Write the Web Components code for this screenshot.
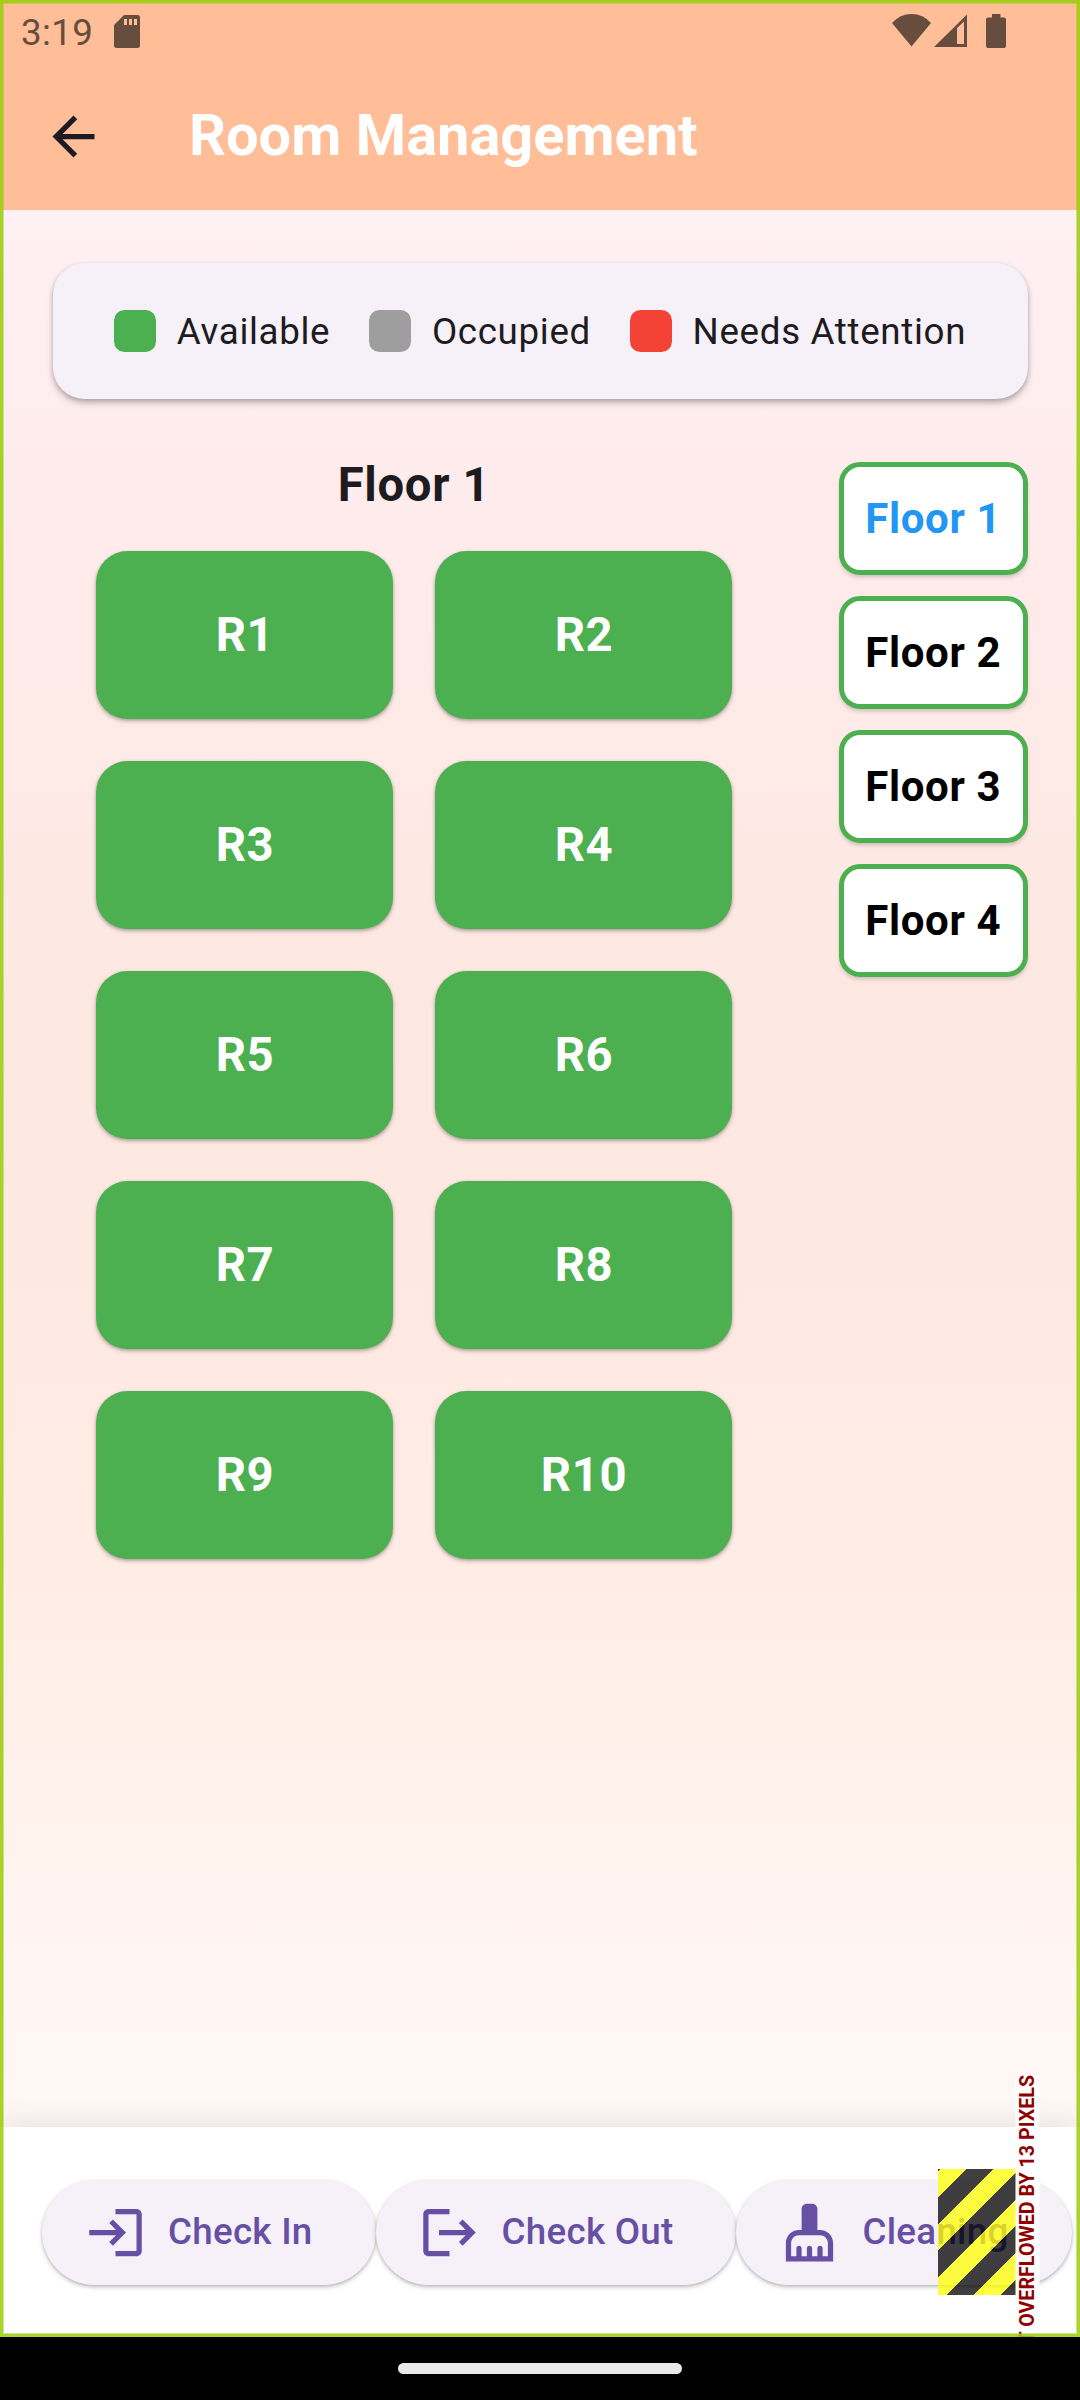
<!DOCTYPE html>
<html lang="en">
<head>
<meta charset="utf-8">
<title>Room Management</title>
<style>
html,body{margin:0;padding:0}
body{width:1080px;height:2400px;overflow:hidden;font-family:Roboto,sans-serif;background:#000;color:#1d1b20}
</style>
</head>
<body>
<hotel-app></hotel-app>
<script>
const define = (name, html) => {
  const t = document.createElement('template');
  t.innerHTML = html;
  customElements.define(name, class extends HTMLElement {
    constructor() {
      super();
      this.attachShadow({ mode: 'open' }).appendChild(t.content.cloneNode(true));
    }
  });
};

define('status-bar', `
<style>
:host{display:flex;height:63px;padding:0 74px 0 21px;box-sizing:border-box;align-items:flex-start;color:#664d3d}
.time{font-size:36.75px;line-height:43px;margin-top:11px;letter-spacing:.35px;width:93px}
svg{display:block;fill:currentColor}
.right{margin-left:auto;display:flex;padding-top:14px}
.sd{margin-top:15px}
</style>
<span class="time">3:19</span>
<svg class="sd" width="26" height="33" viewBox="0 0 26 33"><path fill-rule="evenodd" d="M10 0h13.500q2.500 0 2.500 2.500v28q0 2.500-2.500 2.500h-21q-2.500 0-2.500-2.500V10zM10 4v6h3V4zM15 4v6h3V4zM20 4v6h3V4z"/></svg>
<div class="right">
<svg width="39" height="33" viewBox="0 0 39 33"><path d="M0 9Q8 0 19.500 0T39 9L19.500 32.500z"/></svg>
<svg width="33" height="33" viewBox="0 0 33 33" style="margin-left:3px"><path fill-rule="evenodd" d="M0 33L33 .5V33zM23 14v16h7V7.500z"/></svg>
<svg width="20" height="34" viewBox="0 0 20 34" style="margin-left:19px"><path d="M6 0h8.500v3.500H18q2 0 2 2V32q0 2-2 2H2q-2 0-2-2V5.500q0-2 2-2h4z"/></svg>
</div>`);

define('app-bar', `
<style>
:host{display:flex;align-items:center;height:147px;padding-left:42px;box-sizing:border-box}
svg{width:63px;height:63px;fill:#1d1b20}
h1{margin:0 0 3px 84px;font-size:57.75px;line-height:68px;font-weight:700;color:#fff;white-space:nowrap}
</style>
<svg viewBox="0 0 24 24"><path d="M20 11H7.830l5.590-5.590L12 4l-8 8 8 8 1.410-1.410L7.830 13H20v-2z"/></svg>
<h1><slot></slot></h1>`);

define('legend-item', `
<style>
:host{display:flex;align-items:center;gap:21px;font-size:36.75px;line-height:52.5px;letter-spacing:.656px;white-space:nowrap}
i{width:42px;height:42px;border-radius:10.5px;background:var(--swatch)}
span{padding-top:2px}
</style><i></i><span><slot></slot></span>`);

define('legend-card', `
<style>
:host{display:flex;justify-content:space-around;align-items:center;height:136.500px;box-sizing:border-box;padding:0 42px;border-radius:31.5px;background:#f6f1f9;box-shadow:0 4px 6px rgba(0,0,0,.25),0 1px 4px rgba(0,0,0,.12)}
</style><slot></slot>`);

define('room-card', `
<style>
:host{display:flex;align-items:center;justify-content:center;height:168px;padding-left:1px;box-sizing:border-box;border-radius:31.5px;background:#4caf50;color:#fff;font-size:47.25px;line-height:56px;font-weight:700;letter-spacing:.656px;box-shadow:0 2px 4px rgba(0,0,0,.26),0 1px 3px rgba(0,0,0,.12)}
</style><slot></slot>`);

define('room-grid', `
<style>
:host{display:block;width:636px}
h2{margin:0;font-size:47.25px;line-height:67px;font-weight:700;letter-spacing:.656px;text-align:center;padding:1px 0 32px}
.grid{display:grid;grid-template-columns:1fr 1fr;gap:42px}
</style><h2>Floor 1</h2><div class="grid"><slot></slot></div>`);

define('floor-tab', `
<style>
:host{display:flex;align-items:center;justify-content:center;box-sizing:border-box;height:112.875px;padding-top:2px;border:5.25px solid #4caf50;border-radius:21px;background:#fff;color:#000;font-size:42px;line-height:50px;font-weight:700;letter-spacing:.656px;white-space:nowrap;box-shadow:0 3px 4px -1px rgba(0,0,0,.2)}
:host([active]){color:#2196f3}
</style><slot></slot>`);

define('floor-tabs', `
<style>:host{display:flex;flex-direction:column;gap:21px;width:188.5px}</style><slot></slot>`);

define('action-button', `
<style>
:host{display:flex;flex:none;align-items:center;height:105px;box-sizing:border-box;padding:0 63px 0 42px;gap:21px;border-radius:52.5px;background:#f6f1f9;color:#6750a4;font-size:36.75px;line-height:52.5px;font-weight:500;letter-spacing:.2625px;white-space:nowrap;box-shadow:0 2px 4px rgba(0,0,0,.25),0 1px 2px rgba(0,0,0,.08)}
::slotted(svg){width:63px;height:63px;fill:currentColor}
span{padding-top:1px}
</style><slot name="icon"></slot><span><slot></slot></span>`);

define('overflow-mark', `
<style>
:host{display:flex;align-items:center;pointer-events:none}
.stripes{width:77.5px;height:126px;background:repeating-linear-gradient(135deg,rgba(0,0,0,.75) 0 1.5px,rgba(255,255,0,.75) 1.5px 20.3px,rgba(0,0,0,.75) 20.3px 37.55px)}
.label{writing-mode:vertical-rl;transform:rotate(180deg);background:#fff;color:#900000;font-size:19.69px;line-height:23.5px;font-weight:700;white-space:nowrap}
</style><div class="stripes"></div><div class="label"><slot></slot></div>`);

define('action-bar', `
<style>
:host{display:block;position:relative;height:210px;padding:52.5px 42px 0;box-sizing:border-box;background:#fff;box-shadow:0 0 32px rgba(0,0,0,.12)}
.row{display:flex}
.mark{position:absolute;left:938.25px;top:-53px;height:316px}
</style><div class="row"><slot></slot></div>
<overflow-mark class="mark">RIGHT OVERFLOWED BY 13 PIXELS</overflow-mark>`);

define('nav-pill', `
<style>
:host{display:flex;justify-content:center;height:63px;padding-top:26px;box-sizing:border-box;background:#000}
i{width:284px;height:11px;border-radius:5.5px;background:#eaeaea}
</style><i></i>`);

define('hotel-app', `
<style>
:host{display:block;width:1080px}
.screen{position:relative;display:flex;flex-direction:column;height:2337px;overflow:hidden}
header{height:210px;background:#ffbe98}
main{flex:1;box-sizing:border-box;padding:52.5px 52.5px 0;background:linear-gradient(180deg,#fff0f4 0,#feebea 18%,#fde8e1 42%,#ffeae3 60%,#ffeee6 74%,#fff3ee 86%,#fff8f6 100%)}
.cols{display:flex;justify-content:space-between;align-items:flex-start;padding:52px 0 0 43.5px}
floor-tabs{margin-top:11px}
.frame{position:absolute;inset:0;border:3px solid rgba(154,205,10,.86);box-shadow:inset 0 0 0 1px rgba(154,205,10,.5);pointer-events:none}
</style>
<div class="screen">
<header><status-bar></status-bar><app-bar>Room Management</app-bar></header>
<main>
<legend-card>
<legend-item style="--swatch:#4caf50">Available</legend-item>
<legend-item style="--swatch:#9e9e9e">Occupied</legend-item>
<legend-item style="--swatch:#f44336">Needs Attention</legend-item>
</legend-card>
<div class="cols">
<room-grid>
<room-card>R1</room-card><room-card>R2</room-card>
<room-card>R3</room-card><room-card>R4</room-card>
<room-card>R5</room-card><room-card>R6</room-card>
<room-card>R7</room-card><room-card>R8</room-card>
<room-card>R9</room-card><room-card>R10</room-card>
</room-grid>
<floor-tabs>
<floor-tab active>Floor 1</floor-tab><floor-tab>Floor 2</floor-tab><floor-tab>Floor 3</floor-tab><floor-tab>Floor 4</floor-tab>
</floor-tabs>
</div>
</main>
<action-bar>
<action-button><svg slot="icon" viewBox="0 0 24 24"><path d="M11 7L9.600 8.400l2.600 2.600H2v2h10.200l-2.600 2.600L11 17l5-5-5-5zm9 12h-8v2h8c1.100 0 2-.9 2-2V5c0-1.100-.9-2-2-2h-8v2h8v14z"/></svg>Check In</action-button>
<action-button><svg slot="icon" viewBox="0 0 24 24"><path d="M17 7l-1.410 1.410L18.170 11H8v2h10.170l-2.580 2.580L17 17l5-5zM4 5h8V3H4c-1.100 0-2 .9-2 2v14c0 1.100.9 2 2 2h8v-2H4V5z"/></svg>Check Out</action-button>
<action-button><svg slot="icon" viewBox="0 0 24 24"><path d="M16 11h-1V3c0-1.100-.9-2-2-2h-2c-1.100 0-2 .9-2 2v8H8c-2.760 0-5 2.240-5 5v7h18v-7c0-2.760-2.240-5-5-5zm3 10h-2v-3c0-.55-.45-1-1-1s-1 .45-1 1v3h-2v-3c0-.55-.45-1-1-1s-1 .45-1 1v3H9v-3c0-.55-.45-1-1-1s-1 .45-1 1v3H5v-5c0-1.650 1.350-3 3-3h8c1.650 0 3 1.350 3 3v5z"/></svg>Cleaning</action-button>
</action-bar>
<div class="frame"></div>
</div>
<nav-pill></nav-pill>`);
</script>
</body>
</html>
